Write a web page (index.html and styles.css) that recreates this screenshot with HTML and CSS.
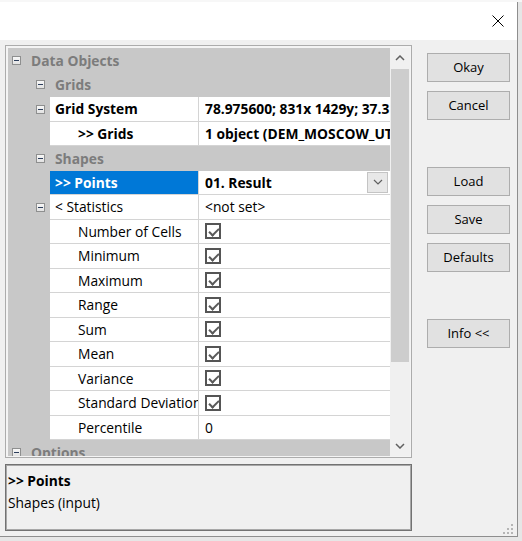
FILE: index.html
```
<!DOCTYPE html>
<html>
<head>
<meta charset="utf-8">
<link rel="stylesheet" href="styles.css">
</head>
<body>
<div class="desk">
  <div class="window">
    <div class="titlebar">
      <svg class="close" width="12" height="12" viewBox="0 0 12 12"><path d="M0.5 0.5 L11.5 11.5 M11.5 0.5 L0.5 11.5" stroke="#000" stroke-width="1" fill="none"/></svg>
    </div>
    <div class="client">
      <div class="leftcol">
        <div class="pgrid">
          <div class="rows">
            <div class="cat lvl0"><span class="exp"></span>Data Objects</div>
            <div class="cat lvl1"><span class="exp"></span>Grids</div>
            <div class="row">
              <div class="margin"><span class="exp"></span></div>
              <div class="name b">Grid System</div>
              <div class="value b"><span class="txt">78.975600; 831x 1429y; 37.314400x 55.493600y</span></div>
            </div>
            <div class="row">
              <div class="margin"></div>
              <div class="name sub b">&gt;&gt; Grids</div>
              <div class="value b"><span class="txt">1 object (DEM_MOSCOW_UTM)</span></div>
            </div>
            <div class="cat lvl1"><span class="exp"></span>Shapes</div>
            <div class="row">
              <div class="margin"></div>
              <div class="name b sel">&gt;&gt; Points</div>
              <div class="value b"><span class="txt">01. Result</span><span class="dd"><svg width="10" height="6" viewBox="0 0 10 6"><path d="M1 1 L5 5 L9 1" stroke="#606060" stroke-width="1.2" fill="none"/></svg></span></div>
            </div>
            <div class="row">
              <div class="margin"><span class="exp"></span></div>
              <div class="name">&lt; Statistics</div>
              <div class="value"><span class="txt">&lt;not set&gt;</span></div>
            </div>
            <div class="row">
              <div class="margin"></div>
              <div class="name sub">Number of Cells</div>
              <div class="value"><span class="chk"></span></div>
            </div>
            <div class="row">
              <div class="margin"></div>
              <div class="name sub">Minimum</div>
              <div class="value"><span class="chk"></span></div>
            </div>
            <div class="row">
              <div class="margin"></div>
              <div class="name sub">Maximum</div>
              <div class="value"><span class="chk"></span></div>
            </div>
            <div class="row">
              <div class="margin"></div>
              <div class="name sub">Range</div>
              <div class="value"><span class="chk"></span></div>
            </div>
            <div class="row">
              <div class="margin"></div>
              <div class="name sub">Sum</div>
              <div class="value"><span class="chk"></span></div>
            </div>
            <div class="row">
              <div class="margin"></div>
              <div class="name sub">Mean</div>
              <div class="value"><span class="chk"></span></div>
            </div>
            <div class="row">
              <div class="margin"></div>
              <div class="name sub">Variance</div>
              <div class="value"><span class="chk"></span></div>
            </div>
            <div class="row">
              <div class="margin"></div>
              <div class="name sub">Standard Deviation</div>
              <div class="value"><span class="chk"></span></div>
            </div>
            <div class="row">
              <div class="margin"></div>
              <div class="name sub">Percentile</div>
              <div class="value"><span class="txt">0</span></div>
            </div>
            <div class="cat lvl0"><span class="exp"></span>Options</div>
          </div>
          <div class="vscroll">
            <div class="sbtn"><svg width="10" height="6" viewBox="0 0 10 6"><path d="M1 5 L5 1 L9 5" stroke="#606060" stroke-width="1.5" fill="none"/></svg></div>
            <div class="thumb"></div>
            <div class="track"></div>
            <div class="sbtn"><svg width="10" height="6" viewBox="0 0 10 6"><path d="M1 1 L5 5 L9 1" stroke="#606060" stroke-width="1.5" fill="none"/></svg></div>
          </div>
        </div>
        <div class="info">
          <div class="info-title">&gt;&gt; Points</div>
          <div>Shapes (input)</div>
        </div>
      </div>
      <div class="buttons">
        <div class="btn">Okay</div>
        <div class="btn">Cancel</div>
        <div class="spacer"></div>
        <div class="btn">Load</div>
        <div class="btn">Save</div>
        <div class="btn">Defaults</div>
        <div class="spacer"></div>
        <div class="btn">Info &lt;&lt;</div>
      </div>
    </div>
    <svg class="grip" width="12" height="12" viewBox="0 0 12 12">
      <rect x="9" y="1" width="2" height="2" fill="#b5b5b5"/>
      <rect x="9" y="5" width="2" height="2" fill="#b5b5b5"/>
      <rect x="5" y="5" width="2" height="2" fill="#b5b5b5"/>
      <rect x="9" y="9" width="2" height="2" fill="#b5b5b5"/>
      <rect x="5" y="9" width="2" height="2" fill="#b5b5b5"/>
      <rect x="1" y="9" width="2" height="2" fill="#b5b5b5"/>
    </svg>
  </div>
</div>
</body>
</html>
```
FILE: styles.css
```
* { box-sizing: border-box; }

body {
  margin: 0;
  width: 522px;
  height: 541px;
  overflow: hidden;
  background: #ececec;
  font-family: "Open Sans", "Noto Sans", sans-serif;
  font-size: 13.8px;
  color: #000;
}

.desk {
  width: 522px;
  height: 541px;
  padding-top: 2px;
  background: linear-gradient(#f7f7f7 0 2px, #e6e6e6 2px);
}

.window {
  position: relative;
  width: 518px;
  height: 535px;
  background: #f0f0f0;
  border-right: 1px solid #8e8e8e;
  border-bottom: 1px solid #8e8e8e;
  display: flex;
  flex-direction: column;
}

.titlebar {
  height: 38px;
  background: #fff;
  display: flex;
  justify-content: flex-end;
  align-items: flex-start;
  padding: 13px 13px 0 0;
}

.close { display: block; }

.client {
  flex: 1;
  display: flex;
  padding: 5px 0 0 5px;
}

.leftcol {
  width: 407px;
  display: flex;
  flex-direction: column;
}

.pgrid {
  height: 413px;
  border: 1px solid #acacac;
  background: #f4f4f4;
  padding: 2px 1px 1px 2px;
  display: flex;
}

.rows {
  width: 382px;
  overflow: hidden;
  background: #c8c8c8;
}

.cat {
  height: 24.5px;
  display: flex;
  align-items: center;
  font-weight: bold;
  color: #7c7c7c;
  white-space: nowrap;
}

.cat.lvl0 { padding-left: 4px; }
.cat.lvl1 { padding-left: 28px; }

.exp {
  display: inline-block;
  position: relative;
  width: 9px;
  height: 9px;
  border: 1px solid #8e8f8f;
  background: linear-gradient(#f7f7f7, #e2e2e2);
  margin-right: 10px;
  flex: none;
}

.exp::after {
  content: "";
  position: absolute;
  left: 1px;
  top: 3px;
  width: 5px;
  height: 1px;
  background: #2c3e5c;
}

.row {
  height: 24.5px;
  display: grid;
  grid-template-columns: 42px 149px 191px;
}

.margin {
  display: flex;
  align-items: center;
  padding-left: 28px;
}

.margin .exp { margin-right: 0; }

.name {
  background: #fff;
  border-right: 1px solid #d4d4d4;
  border-bottom: 1px solid #d4d4d4;
  padding-left: 5px;
  display: flex;
  align-items: center;
  white-space: nowrap;
  overflow: hidden;
}

.name.sub { padding-left: 28px; }

.name.sel {
  background: #0078d7;
  color: #fff;
}

.b { font-weight: bold; }

.value {
  background: #fff;
  border-bottom: 1px solid #d4d4d4;
  padding-left: 6px;
  display: flex;
  align-items: center;
  white-space: nowrap;
  overflow: hidden;
}

.value .txt {
  flex: 1;
  overflow: hidden;
}

.dd {
  flex: none;
  width: 21px;
  height: 21px;
  margin-right: 2px;
  background: #e8e8e8;
  border: 1px solid #c4c4c4;
  display: flex;
  align-items: center;
  justify-content: center;
}

.chk {
  position: relative;
  display: block;
  width: 16px;
  height: 16px;
  border: 2px solid #555;
  background: #fff;
}

.chk::after {
  content: "";
  position: absolute;
  left: 2px;
  top: 0px;
  width: 8px;
  height: 4px;
  border-left: 2px solid #5a5a5a;
  border-bottom: 2px solid #5a5a5a;
  transform: translate(0px, 3px) rotate(-45deg);
}

.vscroll {
  width: 20px;
  background: #f0f0f0;
  display: flex;
  flex-direction: column;
}

.sbtn {
  height: 20px;
  display: flex;
  align-items: center;
  justify-content: center;
}

.thumb {
  height: 293px;
  margin: 1px 1px 0 1px;
  background: #cdcdcd;
}

.track { flex: 1; }

.info {
  margin-top: 6px;
  height: 67px;
  border: 1px solid #727272;
  box-shadow: inset 0 0 0 1px #a8a8a8;
  padding: 5px 2px;
  line-height: 22px;
}

.info-title { font-weight: bold; }

.buttons {
  width: 83px;
  margin-left: 15px;
  padding-top: 8px;
  display: flex;
  flex-direction: column;
  gap: 9px;
  font-size: 13px;
}

.btn {
  height: 29px;
  border: 1px solid #adadad;
  background: #e1e1e1;
  text-align: center;
  line-height: 27px;
}

.spacer { height: 29px; }

.grip {
  position: absolute;
  right: 3px;
  bottom: 1px;
}
```
